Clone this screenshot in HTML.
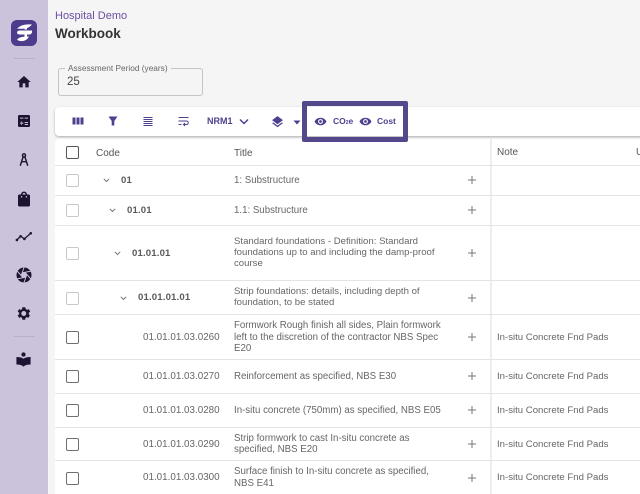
<!DOCTYPE html>
<html><head><meta charset="utf-8"><style>
*{box-sizing:border-box}
html,body{margin:0;padding:0;height:494px;overflow:hidden}
#r{position:absolute;left:0;top:0;width:640px;height:494px;overflow:hidden;background:#f5f5f5;font-family:"Liberation Sans",sans-serif;color:#666}
.a{position:absolute}
.t{position:absolute;white-space:nowrap;font-size:9.600px;line-height:11px}
.n{font-size:9.850px}
.u{font-size:9.700px}
.m{line-height:11.500px}
.line{position:absolute;left:55px;right:0;height:1px;background:#e4e4e4}
.cb{position:absolute;left:66px;width:13px;height:13px;border:1.500px solid #707070;border-radius:2px;background:#fff}
.cb.l{border-color:#c8c8c8}
.b{font-weight:bold;color:#5a5a5a;letter-spacing:.15px}
svg{position:absolute;overflow:visible}
.plus{left:467px;width:10px;height:10px}
.p{color:#4f3f8f;font-weight:bold;font-size:9px}
</style></head><body><div id="r">
<div class="a" style="left:0;top:0;width:48px;height:494px;background:#cbc2dc"></div>
<div class="a" style="left:11px;top:20px;width:25.500px;height:25.500px;border-radius:6px;background:#4f3b8c"></div>
<svg style="left:11px;top:20px" width="26" height="26" viewBox="0 0 26 26" fill="#fff"><path d="M6 8.500Q11 3.500 21 4.500Q18 8 14 8.500Q10 9 6 8.500Z"/><path d="M6 13Q6 10.500 9 10.500L21 10.500Q21.500 13.500 19 14.500L9 14.500Q6.500 14.500 6 13Z"/><path d="M6 19.500Q9 16 18 16.500Q16 20.500 12 21Q8 21.500 6 19.500Z"/><path d="M13.500 7h2.500v2.500h-2.500zM13.500 14h2.500v3h-2.500z"/></svg>
<div class="a" style="left:14px;top:58px;width:21px;height:1px;background:#b9afcd"></div>
<div class="a" style="left:14px;top:336px;width:21px;height:1px;background:#b9afcd"></div>
<svg style="left:16px;top:74px" width="16" height="16" viewBox="0 0 24 24" fill="#1c1430"><path d="M10 20v-6h4v6h5v-8h3L12 3 2 12h3v8z"/></svg>
<svg style="left:16px;top:113px" width="16" height="16" viewBox="0 0 24 24" fill="#1c1430"><path d="M19 3H5a2 2 0 0 0-2 2v14a2 2 0 0 0 2 2h14a2 2 0 0 0 2-2V5a2 2 0 0 0-2-2zm-6 4h5v1.500h-5zM6 7h5v1.500H6zm5 9H9v2H8v-2H6v-1.500h2v-2h1v2h2zm7 2h-5v-1.500h5zm0-3h-5v-1.500h5z"/></svg>
<svg style="left:16px;top:152px" width="16" height="15" viewBox="0 0 24 24" fill="none" stroke="#1c1430" stroke-width="2.300"><circle cx="12" cy="5.500" r="2.500"/><path d="M10.500 8L6 22M13.500 8l4.500 14M8 15.500h8"/></svg>
<svg style="left:15px;top:190px" width="18" height="18" viewBox="0 0 24 24" fill="#1c1430"><path d="M18 6h-2a4 4 0 0 0-8 0H6a2 2 0 0 0-2 2v12a2 2 0 0 0 2 2h12a2 2 0 0 0 2-2V8a2 2 0 0 0-2-2zm-6-2a2 2 0 0 1 2 2h-4a2 2 0 0 1 2-2zm-4 6V8h1.500v2zm6.500 0V8H16v2z"/></svg>
<svg style="left:15px;top:228px" width="18" height="18" viewBox="0 0 24 24" fill="#1c1430" stroke="#1c1430" stroke-width="1.700"><path fill="none" d="M2.500 16l5-5 5 3.500 8.500-7.500"/><circle cx="2.500" cy="16" r=".9"/><circle cx="7.500" cy="11" r=".9"/><circle cx="12.500" cy="14.500" r=".9"/><circle cx="21" cy="7" r=".9"/></svg>
<svg style="left:15px;top:266px" width="18" height="18" viewBox="0 0 24 24"><circle cx="12" cy="12" r="10" fill="#1c1430"/><path fill="none" stroke="#cbc2dc" stroke-width="1.300" d="M8.500 12L12 2M10.300 9L20.600 7M13.800 9l7 8M15.500 12L12 22M13.700 15L3.400 17M10.200 15l-7-8"/><path fill="#cbc2dc" d="M12 8.200l3.300 1.900v3.800L12 15.800l-3.300-1.900v-3.800z"/></svg>
<svg style="left:15px;top:305px" width="17" height="17" viewBox="0 0 24 24" fill="#1c1430"><path d="M19.400 13a7.600 7.600 0 0 0 0-2l2.100-1.600-2-3.500-2.500 1a7.500 7.500 0 0 0-1.700-1L14.400 3.200h-4L10 5.900a7.500 7.500 0 0 0-1.700 1l-2.500-1-2 3.500L5.900 11a7.600 7.600 0 0 0 0 2l-2.100 1.600 2 3.500 2.500-1c.5.400 1.100.7 1.700 1l.4 2.700h4l.4-2.700c.6-.3 1.200-.6 1.700-1l2.500 1 2-3.500zM12.400 15.500a3.500 3.500 0 1 1 0-7 3.500 3.500 0 0 1 0 7z"/></svg>
<svg style="left:15px;top:351px" width="17" height="17" viewBox="0 0 24 24" fill="#1c1430"><circle cx="12" cy="5" r="3"/><path d="M12 11c-2.500-2-6-2.500-10-2.500V19c4 0 7 .5 10 3 3-2.500 6-3 10-3V8.500c-4 0-7.500.5-10 2.500z"/></svg>

<div class="t" style="left:55px;top:10px;font-size:11px;line-height:12px;color:#6c4fa3">Hospital Demo</div>
<div class="t" style="left:55px;top:26px;font-size:13.500px;line-height:16px;font-weight:bold;color:#333">Workbook</div>

<div class="a" style="left:58px;top:68px;width:145px;height:28px;border:1px solid #c4c4c4;border-radius:3px"></div>
<div class="t" style="left:65px;top:63px;padding:0 3px;background:#f5f5f5;font-size:8.300px;line-height:10px;color:#666">Assessment Period (years)</div>
<div class="t" style="left:67px;top:76px;font-size:11.500px;line-height:13px;color:#444">25</div>

<div class="a" style="left:55px;top:107px;width:600px;height:29px;background:#fff;border-radius:4px;box-shadow:0 1px 2px rgba(0,0,0,.3)"></div>
<div class="a" style="left:55px;top:139px;width:600px;height:355px;background:#fff;border-radius:4px 0 0 0"></div>

<svg style="left:71px;top:115px" width="14" height="12" viewBox="0 0 14 12" fill="#4f3f8f"><path d="M1.500 2.500h3v7h-3zM5.500 2.500h3v7h-3zM9.500 2.500h3v7h-3z"/></svg>
<svg style="left:107px;top:115px" width="12" height="12" viewBox="0 0 12 12" fill="#4f3f8f"><path d="M1.500 1.500h9L7.300 6v4.500H4.700V6z"/></svg>
<svg style="left:142px;top:115px" width="12" height="12" viewBox="0 0 12 12" fill="#4f3f8f"><path d="M1.500 2h9v1h-9zM1.500 4h9v1h-9zM1.500 6h9v1h-9zM1.500 8h9v1h-9zM1.500 10h9v1h-9z"/></svg>
<svg style="left:177px;top:115px" width="13" height="12" viewBox="0 0 13 12" fill="none" stroke="#4f3f8f" stroke-width="1"><path d="M1.500 2.500h10M1.500 6h8a1.700 1.700 0 0 1 0 3.500H7M8 8l-1.500 1.500L8 11M1.500 9.500h3"/></svg>
<div class="t p" style="left:207px;top:116px;line-height:11px;font-size:9px">NRM1</div>
<svg style="left:239px;top:118px" width="10" height="8" viewBox="0 0 10 8" fill="none" stroke="#4f3f8f" stroke-width="1.500"><path d="M1 1.500l4 4 4-4"/></svg>
<svg style="left:271px;top:115px" width="13" height="13" viewBox="0 0 24 24" fill="#4f3f8f"><path d="M12 2L2 9.500l10 7.500 10-7.500zM12 19.500l-8-6-2 1.500 10 7.500L22 15l-2-1.500z"/></svg>
<svg style="left:293px;top:120px" width="8" height="5" viewBox="0 0 8 5" fill="#4f3f8f"><path d="M0.500 0.500h7L4 4.500z"/></svg>

<div class="a" style="left:302px;top:101px;width:106px;height:41px;border:5px solid #54478c;border-radius:2px"></div>
<svg style="left:314px;top:115px" width="13" height="13" viewBox="0 0 24 24" fill="#4f3f8f"><path d="M12 5C7 5 2.700 8 1 12c1.700 4 6 7 11 7s9.300-3 11-7c-1.700-4-6-7-11-7zm0 11.500a4.500 4.500 0 1 1 0-9 4.500 4.500 0 0 1 0 9zm0-7a2.500 2.500 0 1 0 0 5 2.500 2.500 0 0 0 0-5z"/></svg>
<div class="t p" style="left:333px;top:116px;font-size:8.500px">CO<span style="font-size:5px">2</span>e</div>
<svg style="left:359px;top:115px" width="13" height="13" viewBox="0 0 24 24" fill="#4f3f8f"><path d="M12 5C7 5 2.700 8 1 12c1.700 4 6 7 11 7s9.300-3 11-7c-1.700-4-6-7-11-7zm0 11.500a4.500 4.500 0 1 1 0-9 4.500 4.500 0 0 1 0 9zm0-7a2.500 2.500 0 1 0 0 5 2.500 2.500 0 0 0 0-5z"/></svg>
<div class="t p" style="left:377px;top:116px;font-size:8.500px">Cost</div>

<div class="a" style="left:490px;top:139px;width:2px;height:355px;background:#eeeeee"></div>

<div class="cb" style="top:146px;border-color:#555"></div>
<div class="t" style="left:96px;top:148px;color:#555;font-size:10px">Code</div>
<div class="t" style="left:234px;top:148px;color:#555;font-size:10px">Title</div>
<div class="t" style="left:497px;top:147px;color:#555;font-size:10px">Note</div>
<div class="t" style="left:636px;top:147px;color:#555;font-size:10px">U</div>

<div class="line" style="top:165px"></div>
<div class="line" style="top:195px"></div>
<div class="line" style="top:225px"></div>
<div class="line" style="top:280px"></div>
<div class="line" style="top:314px"></div>
<div class="line" style="top:359px"></div>
<div class="line" style="top:393px"></div>
<div class="line" style="top:427px"></div>
<div class="line" style="top:460px"></div>

<div class="cb l" style="top:174px"></div>
<div class="cb l" style="top:204px"></div>
<div class="cb l" style="top:247px"></div>
<div class="cb l" style="top:292px"></div>
<div class="cb" style="top:331px"></div>
<div class="cb" style="top:370px"></div>
<div class="cb" style="top:404px"></div>
<div class="cb" style="top:438px"></div>
<div class="cb" style="top:472px"></div>

<svg style="left:103px;top:178px" width="7" height="5" viewBox="0 0 7 5" fill="none" stroke="#777"><path d="M.8 .8L3.500 3.500 6.200 .8"/></svg>
<svg style="left:109px;top:208px" width="7" height="5" viewBox="0 0 7 5" fill="none" stroke="#777"><path d="M.8 .8L3.500 3.500 6.200 .8"/></svg>
<svg style="left:114px;top:251px" width="7" height="5" viewBox="0 0 7 5" fill="none" stroke="#777"><path d="M.8 .8L3.500 3.500 6.200 .8"/></svg>
<svg style="left:120px;top:296px" width="7" height="5" viewBox="0 0 7 5" fill="none" stroke="#777"><path d="M.8 .8L3.500 3.500 6.200 .8"/></svg>

<div class="t b" style="left:121px;top:175px">01</div>
<div class="t b" style="left:127px;top:205px">01.01</div>
<div class="t b" style="left:132px;top:248px">01.01.01</div>
<div class="t b" style="left:138px;top:292px">01.01.01.01</div>
<div class="t n" style="left:143px;top:332px">01.01.01.03.0260</div>
<div class="t n" style="left:143px;top:371px">01.01.01.03.0270</div>
<div class="t n" style="left:143px;top:405px">01.01.01.03.0280</div>
<div class="t n" style="left:143px;top:439px">01.01.01.03.0290</div>
<div class="t n" style="left:143px;top:472px">01.01.01.03.0300</div>

<div class="t u" style="left:234px;top:175px">1: Substructure</div>
<div class="t u" style="left:234px;top:205px">1.1: Substructure</div>
<div class="t" style="left:234px;top:236px">Standard foundations - Definition: Standard<br>foundations up to and including the damp-proof<br>course</div>
<div class="t" style="left:234px;top:286px">Strip foundations: details, including depth of<br>foundation, to be stated</div>
<div class="t m u" style="left:234px;top:320px">Formwork Rough finish all sides, Plain formwork<br>left to the discretion of the contractor NBS Spec<br>E20</div>
<div class="t u" style="left:234px;top:371px">Reinforcement as specified, NBS E30</div>
<div class="t u" style="left:234px;top:405px">In-situ concrete (750mm) as specified, NBS E05</div>
<div class="t u" style="left:234px;top:433px">Strip formwork to cast In-situ concrete as<br>specified, NBS E20</div>
<div class="t m u" style="left:234px;top:466px">Surface finish to In-situ concrete as specified,<br>NBS E41</div>

<svg class="plus" style="top:175px" viewBox="0 0 10 10" stroke="#777"><path d="M5 1v8M1 5h8"/></svg>
<svg class="plus" style="top:205px" viewBox="0 0 10 10" stroke="#777"><path d="M5 1v8M1 5h8"/></svg>
<svg class="plus" style="top:248px" viewBox="0 0 10 10" stroke="#777"><path d="M5 1v8M1 5h8"/></svg>
<svg class="plus" style="top:293px" viewBox="0 0 10 10" stroke="#777"><path d="M5 1v8M1 5h8"/></svg>
<svg class="plus" style="top:332px" viewBox="0 0 10 10" stroke="#777"><path d="M5 1v8M1 5h8"/></svg>
<svg class="plus" style="top:371px" viewBox="0 0 10 10" stroke="#777"><path d="M5 1v8M1 5h8"/></svg>
<svg class="plus" style="top:405px" viewBox="0 0 10 10" stroke="#777"><path d="M5 1v8M1 5h8"/></svg>
<svg class="plus" style="top:439px" viewBox="0 0 10 10" stroke="#777"><path d="M5 1v8M1 5h8"/></svg>
<svg class="plus" style="top:473px" viewBox="0 0 10 10" stroke="#777"><path d="M5 1v8M1 5h8"/></svg>

<div class="t" style="left:497px;top:332px">In-situ Concrete Fnd Pads</div>
<div class="t" style="left:497px;top:371px">In-situ Concrete Fnd Pads</div>
<div class="t" style="left:497px;top:405px">In-situ Concrete Fnd Pads</div>
<div class="t" style="left:497px;top:439px">In-situ Concrete Fnd Pads</div>
<div class="t" style="left:497px;top:472px">In-situ Concrete Fnd Pads</div>
</div></body></html>
